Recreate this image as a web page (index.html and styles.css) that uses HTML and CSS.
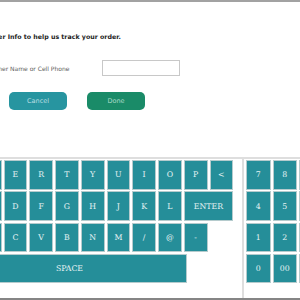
FILE: index.html
```html
<!DOCTYPE html>
<html lang="en">
<head>
    <meta charset="UTF-8">
    <title>Customer Info</title>
    <link rel="stylesheet" href="styles.css">
</head>
<body>
<div class="page">
    <div class="panel">
        <p class="title">Enter Customer Info to help us track your order.</p>
        <div class="field">
            <label class="field-label" for="cust">Customer Name or Cell Phone</label>
            <input class="field-input" id="cust" type="text">
        </div>
        <div class="actions">
            <button class="btn cancel">Cancel</button>
            <button class="btn done">Done</button>
        </div>
    </div>

    <div class="keyboard">
        <div class="letters">
            <div class="row">
                <span class="key">Q</span><span class="key">W</span><span class="key">E</span><span class="key">R</span><span class="key">T</span><span class="key">Y</span><span class="key">U</span><span class="key">I</span><span class="key">O</span><span class="key">P</span><span class="key">&lt;</span>
            </div>
            <div class="row">
                <span class="key">A</span><span class="key">S</span><span class="key">D</span><span class="key">F</span><span class="key">G</span><span class="key">H</span><span class="key">J</span><span class="key">K</span><span class="key">L</span><span class="key wide">ENTER</span>
            </div>
            <div class="row">
                <span class="key">Z</span><span class="key">X</span><span class="key">C</span><span class="key">V</span><span class="key">B</span><span class="key">N</span><span class="key">M</span><span class="key">/</span><span class="key">@</span><span class="key">-</span>
            </div>
            <div class="row">
                <span class="key space">SPACE</span>
            </div>
        </div>
        <div class="numpad">
            <div class="row">
                <span class="key">7</span><span class="key">8</span><span class="key">9</span>
            </div>
            <div class="row">
                <span class="key">4</span><span class="key">5</span><span class="key">6</span>
            </div>
            <div class="row">
                <span class="key">1</span><span class="key">2</span><span class="key">3</span>
            </div>
            <div class="row">
                <span class="key">0</span><span class="key">00</span><span class="key">.</span>
            </div>
        </div>
    </div>
</div>
</body>
</html>
```

FILE: styles.css
```css
* {
    margin: 0;
    padding: 0;
    box-sizing: border-box;
}
body {
    width: 300px;
    height: 300px;
    overflow: hidden;
    background: #fff;
}
.page {
    height: 300px;
    border-top: 2px solid #a2a2a2;
    border-bottom: 2px solid #858585;
    display: flex;
    flex-direction: column;
}
.panel {
    flex: 1;
    padding-top: 30px;
    margin-left: -50px;
}
.title {
    font-family: "DejaVu Sans", Verdana, sans-serif;
    font-weight: bold;
    font-size: 6.3px;
    color: #1c1c1c;
    line-height: 10px;
}
.field {
    display: flex;
    align-items: center;
    margin-top: 18px;
    padding-left: 29px;
}
.field-label {
    width: 123px;
    font-family: "DejaVu Sans", Verdana, sans-serif;
    font-size: 6px;
    color: #5e5e5e;
}
.field-input {
    width: 78px;
    height: 16px;
    border: 1px solid #c8c8c8;
    outline: none;
}
.actions {
    display: flex;
    gap: 20px;
    margin-top: 16px;
    padding-left: 59px;
}
.btn {
    width: 58px;
    height: 18px;
    border: none;
    border-radius: 5px;
    font-family: "DejaVu Sans", Verdana, sans-serif;
    font-size: 6.5px;
    color: #b9dfe2;
}
.cancel {
    background: #2795a0;
}
.done {
    background: #1a8b68;
    color: #a9dcc8;
}
.keyboard {
    height: 141px;
    flex-shrink: 0;
    border-top: 2px solid #dedede;
    display: flex;
}
.letters {
    width: 292px;
    flex-shrink: 0;
    margin-left: -48px;
    padding-top: 1px;
    border-right: 2px solid #dedede;
    display: flex;
    flex-direction: column;
    gap: 1.8px;
}
.numpad {
    flex-shrink: 0;
    padding: 1px 0 0 2px;
    display: flex;
    flex-direction: column;
    gap: 1.8px;
}
.row {
    display: flex;
    gap: 2px;
}
.key {
    flex-shrink: 0;
    width: 23.75px;
    height: 29.5px;
    background: #258e99;
    border: 1px solid #b5cbcd;
    color: #e6f3f4;
    font-family: "DejaVu Serif", "Liberation Serif", serif;
    font-size: 7.8px;
    display: flex;
    align-items: center;
    justify-content: center;
}
.numpad .key {
    width: 24.5px;
}
.wide {
    width: 49.5px;
}
.space {
    width: 235px;
}
```
